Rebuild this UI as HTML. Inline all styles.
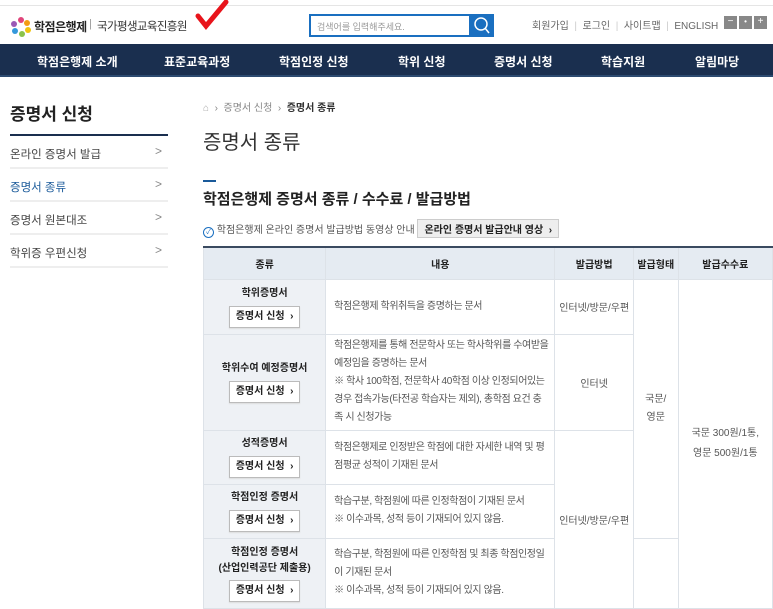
<!DOCTYPE html>
<html><head><meta charset="utf-8"><style>
*{margin:0;padding:0;box-sizing:border-box}
body{width:773px;height:607px;overflow:hidden;background:#fff;font-family:"Liberation Sans","Noto Sans CJK KR",sans-serif;color:#333;position:relative}
.a{position:absolute;white-space:nowrap}
.nav{position:absolute;left:0;top:44px;width:773px;height:33px;background:#1a2f4f;border-bottom:2px solid #2c4a70}
.nav span{position:absolute;top:9px;color:#fff;font-size:12px;font-weight:bold}
.btn{display:inline-block;border:1px solid #bbb;background:#fff;font-size:10px;font-weight:bold;padding:2px 6px;color:#222;box-shadow:0 1px 1px #ddd}
table{position:absolute;left:203px;top:246px;border-collapse:collapse;font-size:10px;table-layout:fixed}
td,th{border:1px solid #dde2e8;text-align:center;vertical-align:middle}
th{background:#e5ebf2;height:32px;font-weight:bold;color:#222;border-top:2px solid #3a4a60}
td.k{background:#eef1f5;font-weight:bold;color:#222;line-height:16px}
td.c{text-align:left;padding:0 6px 0 8px;color:#555;line-height:18px;letter-spacing:-0.4px}
td{color:#555}
.side{position:absolute;left:10px;width:158px;font-size:11.5px;color:#444;border-bottom:2px solid #eee;height:33px;padding-top:10px}
.side i{position:absolute;right:6px;top:8px;font-style:normal;color:#888;font-size:12px}
</style></head><body>
<div class="a" style="left:0;top:5px;width:773px;border-top:1px solid #e5e5e5"></div>
<svg class="a" style="left:10px;top:16px" width="22" height="22" viewBox="0 0 22 22">
<circle cx="11" cy="4" r="3" fill="#e0457b"/><circle cx="17" cy="7" r="3" fill="#f39c12"/><circle cx="18" cy="14" r="3" fill="#f1c40f"/><circle cx="12" cy="18" r="3" fill="#8bc34a"/><circle cx="5" cy="15" r="3" fill="#3498db"/><circle cx="4" cy="8" r="3" fill="#9b59b6"/></svg>
<div class="a" style="left:34px;top:18px;font-size:12px;font-weight:bold;color:#222;letter-spacing:-0.5px">학점은행제</div>
<div class="a" style="left:89px;top:18px;font-size:11px;color:#999">|</div>
<div class="a" style="left:97px;top:18px;font-size:11.5px;color:#333;letter-spacing:-0.6px">국가평생교육진흥원</div>
<svg class="a" style="left:194px;top:0" width="40" height="32"><path d="M4 16 L12 26 L32 2" stroke="#e8141b" stroke-width="5" fill="none" stroke-linecap="round"/></svg>
<div class="a" style="left:309px;top:14px;width:162px;height:23px;border:2px solid #1a6fc0;font-size:9px;color:#999;padding:4px 6px">검색어를 입력해주세요.</div>
<div class="a" style="left:470px;top:14px;width:24px;height:23px;background:#1a6fc0"><svg width="24" height="23"><circle cx="11" cy="10" r="6" stroke="#fff" stroke-width="1.5" fill="none"/><path d="M15 14 L19 19" stroke="#fff" stroke-width="1.5"/></svg></div>
<div class="a" style="left:532px;top:17px;font-size:10px;color:#666">회원가입 <span style="color:#ccc">&nbsp;|&nbsp;</span> 로그인 <span style="color:#ccc">&nbsp;|&nbsp;</span> 사이트맵 <span style="color:#ccc">&nbsp;|&nbsp;</span> ENGLISH</div>
<div class="a" style="left:724px;top:16px;width:13px;height:13px;background:#888;color:#fff;font-size:10px;text-align:center;line-height:12px">−</div>
<div class="a" style="left:739px;top:16px;width:13px;height:13px;background:#888;color:#fff;font-size:8px;text-align:center;line-height:12px">•</div>
<div class="a" style="left:754px;top:16px;width:13px;height:13px;background:#888;color:#fff;font-size:10px;text-align:center;line-height:12px">+</div>
<div class="nav"><span style="left:37px">학점은행제 소개</span><span style="left:164px">표준교육과정</span><span style="left:279px">학점인정 신청</span><span style="left:398px">학위 신청</span><span style="left:494px">증명서 신청</span><span style="left:601px">학습지원</span><span style="left:695px">알림마당</span></div>

<div class="a" style="left:10px;top:100px;font-size:17px;font-weight:bold;color:#222">증명서 신청</div>
<div class="a" style="left:10px;top:134px;width:158px;border-top:2px solid #1a2f4f"></div>
<div class="side" style="top:136px">온라인 증명서 발급<i>&gt;</i></div>
<div class="side" style="top:169px;color:#1a5a9a">증명서 종류<i>&gt;</i></div>
<div class="side" style="top:202px">증명서 원본대조<i>&gt;</i></div>
<div class="side" style="top:235px">학위증 우편신청<i>&gt;</i></div>

<div class="a" style="left:203px;top:99px;font-size:10px;color:#888"><span style="color:#aaa">⌂</span> &nbsp;›&nbsp; 증명서 신청 &nbsp;›&nbsp; <b style="color:#333">증명서 종류</b></div>
<div class="a" style="left:203px;top:126px;font-size:20px;color:#333">증명서 종류</div>
<div class="a" style="left:203px;top:180px;width:13px;border-top:2px solid #1a5a9a"></div>
<div class="a" style="left:203px;top:188px;font-size:15px;font-weight:bold;color:#222">학점은행제 증명서 종류 / 수수료 / 발급방법</div>
<div class="a" style="left:203px;top:219px;font-size:10px;color:#555"><span style="display:inline-block;width:11px;height:11px;border:1.5px solid #1a6fc0;border-radius:50%;font-size:7px;color:#1a6fc0;text-align:center;line-height:9px;vertical-align:-1px">✓</span> 학점은행제 온라인 증명서 발급방법 동영상 안내 <span style="display:inline-block;background:#eee;border:1px solid #ccc;padding:1px 6px;font-weight:bold;color:#222">온라인 증명서 발급안내 영상 &nbsp;›</span></div>

<table>
<colgroup><col style="width:123px"><col style="width:231px"><col style="width:79px"><col style="width:45px"><col style="width:95px"></colgroup>
<tr><th>종류</th><th>내용</th><th>발급방법</th><th>발급형태</th><th>발급수수료</th></tr>
<tr style="height:55px"><td class="k">학위증명서<br><span class="btn" style="margin-top:4px">증명서 신청 &nbsp;›</span></td><td class="c">학점은행제 학위취득을 증명하는 문서</td><td>인터넷/방문/우편</td><td rowspan="4" style="line-height:18px">국문/<br>영문</td><td rowspan="5" style="line-height:20px">국문 300원/1통,<br>영문 500원/1통</td></tr>
<tr style="height:96px"><td class="k">학위수여 예정증명서<br><span class="btn" style="margin-top:4px">증명서 신청 &nbsp;›</span></td><td class="c">학점은행제를 통해 전문학사 또는 학사학위를 수여받을 예정임을 증명하는 문서<br>※ 학사 100학점, 전문학사 40학점 이상 인정되어있는 경우 접속가능(타전공 학습자는 제외), 총학점 요건 충족 시 신청가능</td><td>인터넷</td></tr>
<tr style="height:54px"><td class="k">성적증명서<br><span class="btn" style="margin-top:4px">증명서 신청 &nbsp;›</span></td><td class="c">학점은행제로 인정받은 학점에 대한 자세한 내역 및 평점평균 성적이 기재된 문서</td><td rowspan="3">인터넷/방문/우편</td></tr>
<tr style="height:54px"><td class="k">학점인정 증명서<br><span class="btn" style="margin-top:4px">증명서 신청 &nbsp;›</span></td><td class="c">학습구분, 학점원에 따른 인정학점이 기재된 문서<br>※ 이수과목, 성적 등이 기재되어 있지 않음.</td></tr>
<tr style="height:70px"><td class="k">학점인정 증명서<br>(산업인력공단 제출용)<br><span class="btn" style="margin-top:3px">증명서 신청 &nbsp;›</span></td><td class="c">학습구분, 학점원에 따른 인정학점 및 최종 학점인정일이 기재된 문서<br>※ 이수과목, 성적 등이 기재되어 있지 않음.</td><td></td></tr>
</table>
</body></html>
